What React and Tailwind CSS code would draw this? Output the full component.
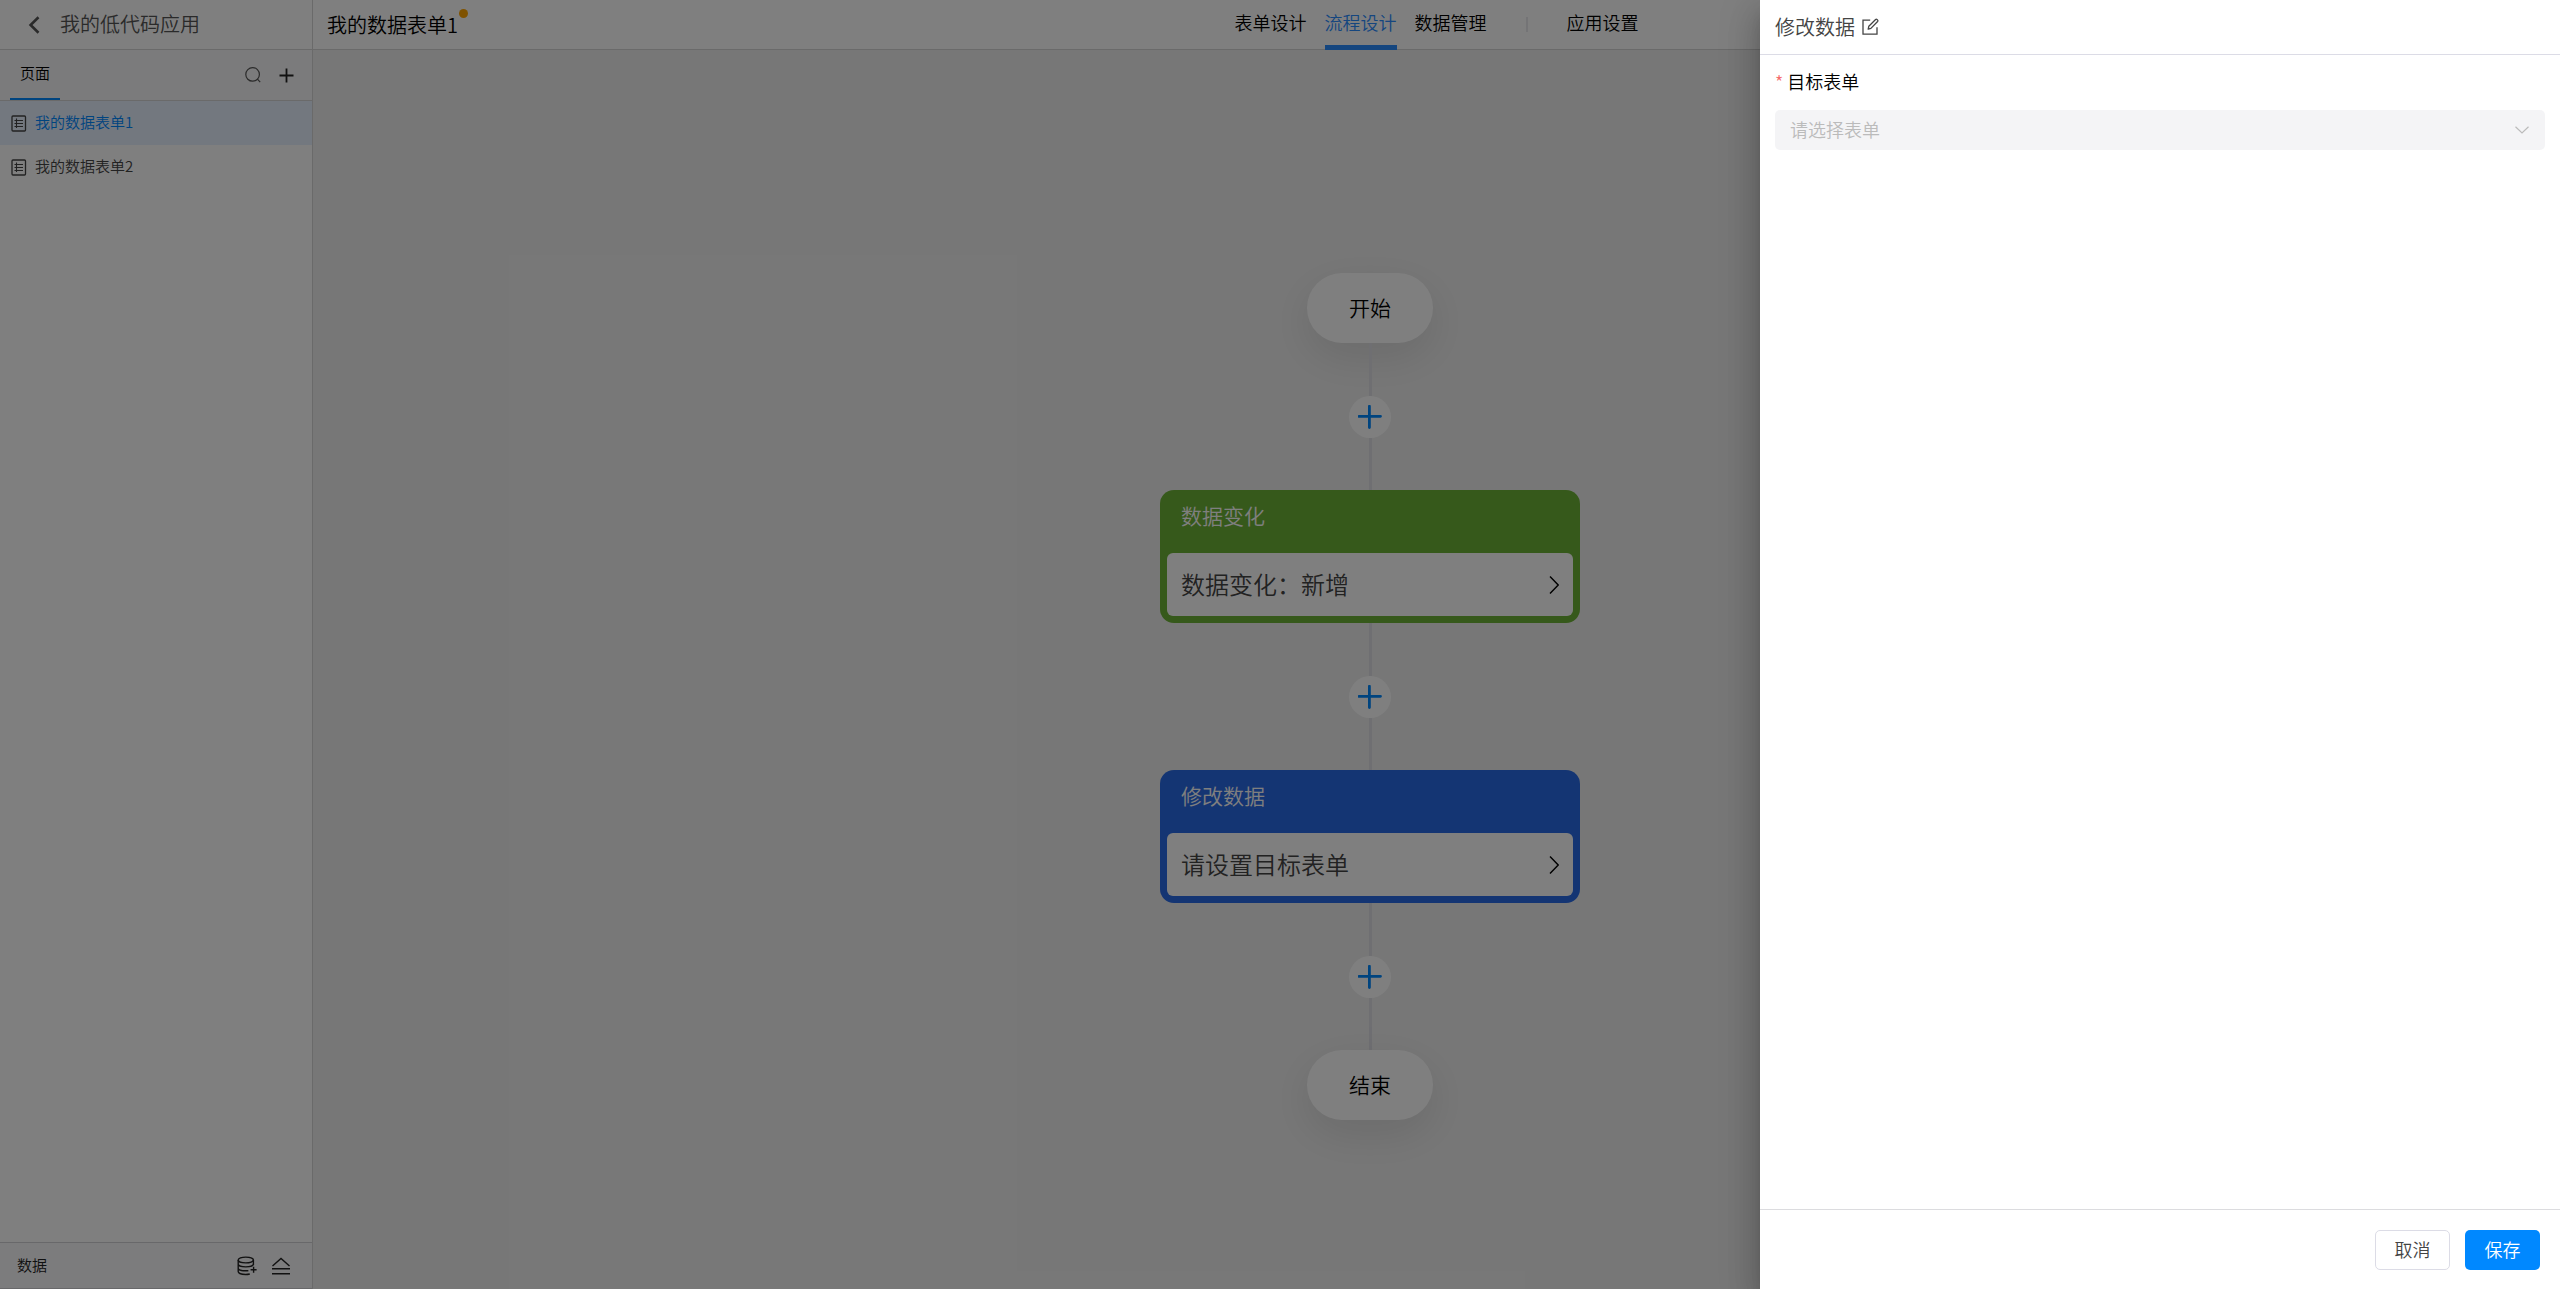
import React, { useState } from 'react';

const PAGES = ['我的数据表单1', '我的数据表单2'];
const TABS = ['表单设计', '流程设计', '数据管理'];

function FormIcon() {
  return (
    <svg className="w-4 h-[17px] shrink-0 text-[#444]" viewBox="0 0 16 17" fill="none" stroke="currentColor">
      <rect x="1" y="1" width="13.5" height="15" rx="1" strokeWidth="1.3" />
      <path d="M5.5 3.5v9.5M3.5 5.5h8.5M3.5 8.5h8.5M3.5 11.5h8.5" strokeWidth="1.1" />
    </svg>
  );
}

function Connector() {
  return (
    <div className="flex flex-col items-center">
      <div className="w-[3px] h-[53px] bg-[#dedee5]" />
      <button aria-label="添加节点" className="w-[42px] h-[42px] rounded-full bg-white flex items-center justify-center text-[#0088ff]">
        <svg className="w-6 h-6" viewBox="0 0 24 24" fill="none" stroke="currentColor" strokeWidth="2.8" strokeLinecap="round">
          <path d="M11.4 1.2v21.4M0.9 11.3h21.6" />
        </svg>
      </button>
      <div className="w-[3px] h-[52px] bg-[#dedee5]" />
    </div>
  );
}

function Terminal({ children }) {
  return (
    <div className="w-[126px] h-[70px] rounded-full bg-white text-[21px] text-black flex items-center justify-center shadow-[0_14px_44px_rgba(0,0,0,0.1)]">
      {children}
    </div>
  );
}

function NodeCard({ title, text, color }) {
  return (
    <div className={`w-[420px] rounded-[14px] p-[7px] ${color}`}>
      <h3 className="h-14 pl-3.5 pt-0.5 text-[21px] leading-8 text-white">{title}</h3>
      <button className="w-full h-[63px] rounded-md bg-white px-3.5 flex items-center justify-between text-2xl text-[#444]">
        <span className="pb-0.5">{text}</span>
        <svg className="w-2.5 h-[18px] text-black" viewBox="0 0 10 18" fill="none" stroke="currentColor" strokeWidth="1.4">
          <path d="M1 0.5L9.2 9L1 17.5" />
        </svg>
      </button>
    </div>
  );
}

function Sidebar() {
  const [current, setCurrent] = useState(PAGES[0]);

  return (
    <aside className="w-[313px] shrink-0 flex flex-col border-r border-[#d4d4d4] bg-white">
      <div className="h-[50px] flex items-center border-b border-[#d4d4d4] pl-7 text-[#555]">
        <button aria-label="返回">
          <svg className="w-3 h-[18px]" viewBox="0 0 12 18" fill="none" stroke="currentColor" strokeWidth="2.6">
            <path d="M10.5 1.2L2.6 9L10.5 16.8" />
          </svg>
        </button>
        <h1 className="ml-5 pb-0.5 text-xl">我的低代码应用</h1>
      </div>

      <div className="h-[51px] flex items-center border-b border-[#d4d4d4] bg-[#f7f7f8] pl-2.5 pr-[18px]">
        <button className="h-[50px] px-2.5 pb-0.5 border-b-2 border-[#0088ff] text-[15px] text-black">页面</button>
        <button aria-label="搜索" className="ml-auto text-[#555]">
          <svg className="w-4 h-4" viewBox="0 0 16 16" fill="none" stroke="currentColor" strokeWidth="1.2">
            <circle cx="7.6" cy="7.4" r="6.8" />
            <path d="M12.4 12.2L15.2 15.2" />
          </svg>
        </button>
        <button aria-label="新增页面" className="ml-[18px] text-[#222]">
          <svg className="w-[15px] h-[15px]" viewBox="0 0 15 15" fill="none" stroke="currentColor" strokeWidth="1.8">
            <path d="M7.5 0.5v14M0.5 7.5h14" />
          </svg>
        </button>
      </div>

      <nav className="flex-1">
        {PAGES.map(page => (
          <button
            key={page}
            onClick={() => setCurrent(page)}
            className={`w-full h-11 pl-[11px] flex items-center gap-2 text-[15px] ${page === current ? 'bg-[#e6f0ff] text-[#0088ff]' : 'text-[#444]'}`}
          >
            <FormIcon />
            <span className="pb-0.5">{page}</span>
          </button>
        ))}
      </nav>

      <div className="h-[47px] flex items-center border-y border-[#d0d0d4] bg-[#f8f8fa] pl-[17px] pr-[22px] text-[#222]">
        <span className="text-[15px]">数据</span>
        <button aria-label="新增数据源" className="ml-auto">
          <svg className="w-5 h-5" viewBox="0 0 20 20" fill="none" stroke="currentColor" strokeWidth="1.4">
            <ellipse cx="8.8" cy="4" rx="7.6" ry="2.9" />
            <path d="M1.2 4v11.6c0 1.6 3.4 2.9 7.6 2.9 1.4 0 2.8-.2 4-.5M16.4 4v5M1.2 8c0 1.6 3.4 2.9 7.6 2.9s7.6-1.3 7.6-2.9M1.2 12c0 1.6 3.4 2.8 7.6 2.8 1 0 1.8 0 2.6-.2M16.6 10.8v6M13.6 13.8h6" />
          </svg>
        </button>
        <button aria-label="展开" className="ml-[15px]">
          <svg className="w-[18px] h-[18px]" viewBox="0 0 18 18" fill="none" stroke="currentColor" strokeWidth="1.4">
            <path d="M0.5 9L9 1.4L17.5 9M0 11.8h18M0 16.8h18" />
          </svg>
        </button>
      </div>
    </aside>
  );
}

function TopBar() {
  const [tab, setTab] = useState('流程设计');

  return (
    <header className="h-[50px] grid grid-cols-[1fr_auto_1fr] border-b border-[#d4d4d4] bg-white text-black">
      <div className="flex items-center pl-3.5">
        <h2 className="relative text-xl">
          我的数据表单1
          <span className="absolute -top-0.5 -right-2.5 w-[9px] h-[9px] rounded-full bg-[#ffa500]" />
        </h2>
      </div>
      <nav className="flex text-lg">
        <div className="flex gap-[18px]">
          {TABS.map(name => (
            <button
              key={name}
              onClick={() => setTab(name)}
              className={`h-[50px] pb-0.5 border-b-[5px] ${name === tab ? 'border-[#2a8cff] text-[#2a8cff]' : 'border-transparent'}`}
            >
              {name}
            </button>
          ))}
        </div>
        <span className="mx-[39px] mt-[17px] w-0.5 h-[15px] bg-[#e8e8ec]" />
        <button className="h-[50px] pb-0.5 border-b-[5px] border-transparent">应用设置</button>
      </nav>
    </header>
  );
}

function Drawer() {
  return (
    <section
      role="dialog"
      aria-label="修改数据"
      className="absolute inset-y-0 right-0 w-[800px] flex flex-col bg-white shadow-[0_10px_13px_-6px_rgba(0,0,0,0.2),0_20px_30px_3px_rgba(0,0,0,0.14),0_8px_38px_6px_rgba(0,0,0,0.12)]"
    >
      <div className="h-[55px] flex items-center gap-1.5 border-b border-[#dcdce6] pl-[15px] text-[#444]">
        <h2 className="text-xl">修改数据</h2>
        <button aria-label="编辑名称">
          <svg className="w-[18px] h-[18px]" viewBox="0 0 18 18" fill="none" stroke="currentColor" strokeWidth="1.3">
            <path d="M9.2 2.2H2v14h14V9.2" />
            <path d="M7.2 11.2l.6-2.9L14.6 1.5q.7-.6 1.4 0l.6.6q.6.7 0 1.4L9.9 10.4z" strokeLinejoin="round" />
          </svg>
        </button>
      </div>

      <form className="flex-1 px-[15px] pt-3">
        <label htmlFor="target" className="flex gap-1 text-lg leading-7 text-black">
          <span className="text-[#f56c6c]">*</span>
          目标表单
        </label>
        <div className="relative mt-[15px]">
          <select
            id="target"
            disabled
            className="block w-full h-10 appearance-none rounded-[5px] bg-[#f4f4f6] px-[15px] pb-0.5 text-lg text-[#bbb] opacity-100"
          >
            <option>请选择表单</option>
          </select>
          <svg className="absolute right-4 top-4 w-3.5 h-2 text-[#bbb] pointer-events-none" viewBox="0 0 14 8" fill="none" stroke="currentColor" strokeWidth="1.2">
            <path d="M0.5 0.8L7 7L13.5 0.8" />
          </svg>
        </div>
      </form>

      <div className="h-20 flex items-center justify-end gap-[15px] border-t border-[#dcdcdf] pr-5 text-lg">
        <button className="w-[75px] h-10 pb-0.5 rounded-[5px] border border-[#dcdce6] bg-white text-[#444]">取消</button>
        <button className="w-[75px] h-10 pb-0.5 rounded-[5px] bg-[#0088ff] text-white">保存</button>
      </div>
    </section>
  );
}

function App() {
  return (
    <div className="relative min-h-screen flex font-['Noto_Sans_CJK_SC',sans-serif] font-[350]">
      <Sidebar />
      <div className="flex-1 flex flex-col">
        <TopBar />
        <main className="flex-1 flex flex-col items-center bg-[#efefef] pt-[223px] pr-[133px]">
          <Terminal>开始</Terminal>
          <Connector />
          <NodeCard title="数据变化" text="数据变化：新增" color="bg-[#6cb236]" />
          <Connector />
          <NodeCard title="修改数据" text="请设置目标表单" color="bg-[#286ae6]" />
          <Connector />
          <Terminal>结束</Terminal>
        </main>
      </div>
      <div className="absolute inset-0 bg-black/50" />
      <Drawer />
    </div>
  );
}

export default App;
